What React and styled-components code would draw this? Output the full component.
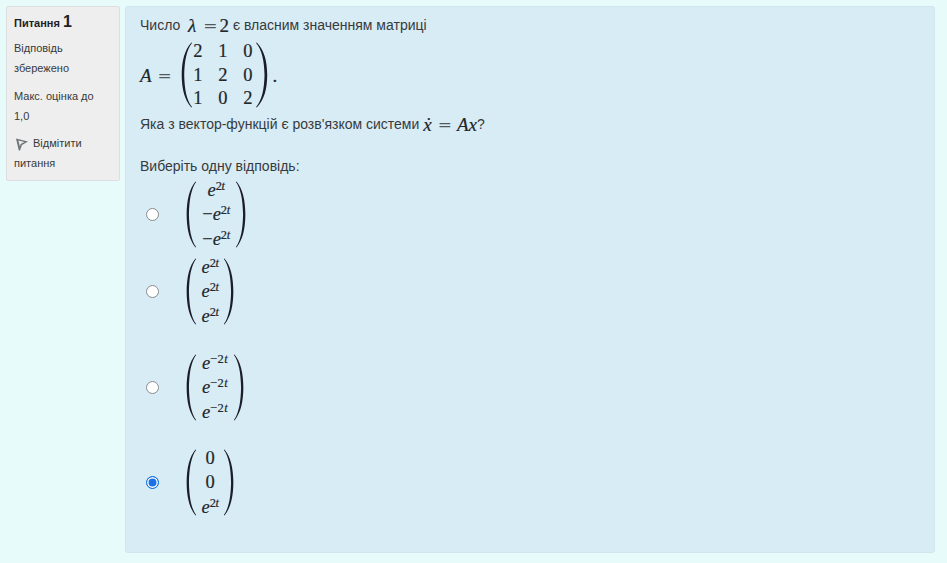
import React from "react";
import styled, { createGlobalStyle } from "styled-components";

const Global = createGlobalStyle`
  html, body { margin: 0; padding: 0; background: #e7fbfb; }
  body { font-family: "Liberation Sans", Arial, sans-serif; color: #373a3c; }
`;
const Page = styled.div`
  display: flex; align-items: flex-start; gap: 5px;
  width: 947px; height: 563px; padding: 6px 12px 0 6px; box-sizing: border-box; overflow: hidden;
`;
const Info = styled.aside`
  width: 114px; height: 175px; box-sizing: border-box; flex: none;
  padding: 6px 8px 0 7px; background: #eeeeee; border: 1px solid #dedede; border-radius: 2px;
  font-size: 11px; line-height: 20px; color: #373a3c;
`;
const Title = styled.h3`
  margin: 0 0 6px; font-size: 11px; font-weight: 700; line-height: 18px; color: #1d2125;
`;
const Num = styled.span`font-size: 16px; font-weight: 700; color: #1d2125;`;
const InfoBlock = styled.div`margin-bottom: ${p => p.$after}px;`;
const FlagIcon = styled.svg`width: 14px; height: 14px; vertical-align: -4px; margin-right: 4px; margin-left: 1px;`;
const Content = styled.main`
  width: 810px; height: 547px; box-sizing: border-box; flex: none;
  padding: 8px 15px 0 14px; background: #d8ecf6; border: 1px solid #cfe6ef; border-radius: 3px;
  font-size: 14px; line-height: 21px; color: #373a3c;
`;
const Line = styled.div`
  display: flex; align-items: center; height: 21px; white-space: pre; margin-bottom: ${p => p.$after || 0}px;
`;
const MathText = styled.span`
  font-family: "Liberation Serif", "DejaVu Serif", serif; font-size: 19px; color: #23262a;
  font-style: ${p => (p.$italic ? "italic" : "normal")}; -webkit-text-stroke: 0.2px #23262a;
`;
const Eq = styled.span`
  font-family: "DejaVu Serif", serif; font-size: 17px; color: #55585b;
  margin: 0 ${p => p.$r}px 0 ${p => p.$l}px;
`;
const Display = styled.div`
  display: flex; align-items: center; height: 66px; margin: 6px 0 6px;
`;
const Grid = styled.div`
  display: grid; grid-template-columns: repeat(${p => p.$cols}, ${p => p.$cw}px);
  column-gap: ${p => p.$gap || 0}px; margin: 0 ${p => p.$mr || 0}px 0 0;
  grid-auto-rows: ${p => p.$rh}px; align-items: center; justify-items: center;
  font-family: "Liberation Serif", serif; font-size: 18.5px; line-height: 1; color: #23262a;
  -webkit-text-stroke: 0.2px #23262a;
`;
const ParenSvg = styled.svg`width: ${p => p.$w}px; height: ${p => p.$h}px; flex: none; display: block;`;
const Paren = ({ right, w = 12, h = 66 }) => (
  <ParenSvg $w={w} $h={h} viewBox="0 0 12 66" preserveAspectRatio="none">
    <path
      d={right
        ? "M1 1 C6.5 8 8.5 19 8.8 33 C8.5 47 6.5 58 1 65 L1.6 65.5 C8.5 58 11.2 47 11.3 33 C11.2 19 8.5 8 1.6 0.5 Z"
        : "M11 1 C5.5 8 3.5 19 3.2 33 C3.5 47 5.5 58 11 65 L10.4 65.5 C3.5 58 0.8 47 0.7 33 C0.8 19 3.5 8 10.4 0.5 Z"}
      fill="#1b1e28"
    />
  </ParenSvg>
);
const Options = styled.div`margin-top: 4px; display: flex; flex-direction: column;`;
const Option = styled.label`
  display: flex; align-items: center; height: 67px; margin-bottom: ${p => p.$after}px;
`;
const Radio = styled.input`
  appearance: none; width: 13px; height: 13px; box-sizing: border-box; margin: 0 0 0 6px; flex: none;
  border-radius: 50%; background: #fff; border: 1px solid #8b8b8b;
  &:checked { border: 1px solid #0f6fde; box-shadow: inset 0 0 0 1.5px #fff; background: #1a73e8; }
`;
const Vector = styled.div`display: flex; align-items: center; margin-left: 27px;`;
const Sup = styled.sup`
  font-size: 12.5px; line-height: 0; vertical-align: 6px; font-family: "Liberation Serif", serif;
  letter-spacing: ${p => (p.$wide ? "0.4px" : "-0.4px")};
`;
const It = styled.i`font-style: italic;`;
const Exp = ({ sign, minus }) => (
  <span>
    {sign ? "−" : ""}<It>e</It><Sup $wide={minus}>{minus ? "−" : ""}2<It>t</It></Sup>
  </span>
);
const Vec = ({ children, cw }) => (
  <Vector>
    <Paren w={11} h={67} />
    <Grid $cols={1} $cw={cw} $rh={24.3}>{children}</Grid>
    <Paren right w={11} h={67} />
  </Vector>
);

export default function App() {
  return (
    <>
      <Global />
      <Page>
        <Info>
          <Title>Питання <Num>1</Num></Title>
          <InfoBlock $after={8}>Відповідь збережено</InfoBlock>
          <InfoBlock $after={7}>Макс. оцінка до 1,0</InfoBlock>
          <div>
            <FlagIcon viewBox="0 0 14 14">
              <path d="M1 1.5 L13 4.5 L7 8 L5 13.5 L3.8 13.5 Z M3.4 3.6 L4.9 9.4 L5.6 7 L9.4 4.9 Z" fill="#6f7477" fillRule="evenodd" />
            </FlagIcon>
            Відмітити питання
          </div>
        </Info>
        <Content>
          <Line>
            Число{"  "}<MathText $italic>λ</MathText><Eq $l={7} $r={2}>=</Eq><MathText>2</MathText> є власним значенням матриці
          </Line>
          <Display>
            <MathText $italic>A</MathText><Eq $l={6} $r={9}>=</Eq>
            <Paren />
            <Grid $cols={3} $cw={10} $gap={15} $rh={23.5} $mr={2}>
              <span>2</span><span>1</span><span>0</span>
              <span>1</span><span>2</span><span>0</span>
              <span>1</span><span>0</span><span>2</span>
            </Grid>
            <Paren right w={13} />
            <MathText>&nbsp;.</MathText>
          </Display>
          <Line $after={21}>
            Яка з вектор-функцій є розв'язком системи <MathText $italic>ẋ</MathText><Eq $l={6} $r={5}>=</Eq><MathText $italic>Ax</MathText>?
          </Line>
          <Line>Виберіть одну відповідь:</Line>
          <Options>
            <Option $after={10}>
              <Radio type="radio" name="q" />
              <Vec cw={38}><Exp /><Exp sign /><Exp sign /></Vec>
            </Option>
            <Option $after={29}>
              <Radio type="radio" name="q" />
              <Vec cw={26}><Exp /><Exp /><Exp /></Vec>
            </Option>
            <Option $after={28}>
              <Radio type="radio" name="q" />
              <Vec cw={36}><Exp minus /><Exp minus /><Exp minus /></Vec>
            </Option>
            <Option $after={0}>
              <Radio type="radio" name="q" defaultChecked />
              <Vec cw={26}><span>0</span><span>0</span><Exp /></Vec>
            </Option>
          </Options>
        </Content>
      </Page>
    </>
  );
}
